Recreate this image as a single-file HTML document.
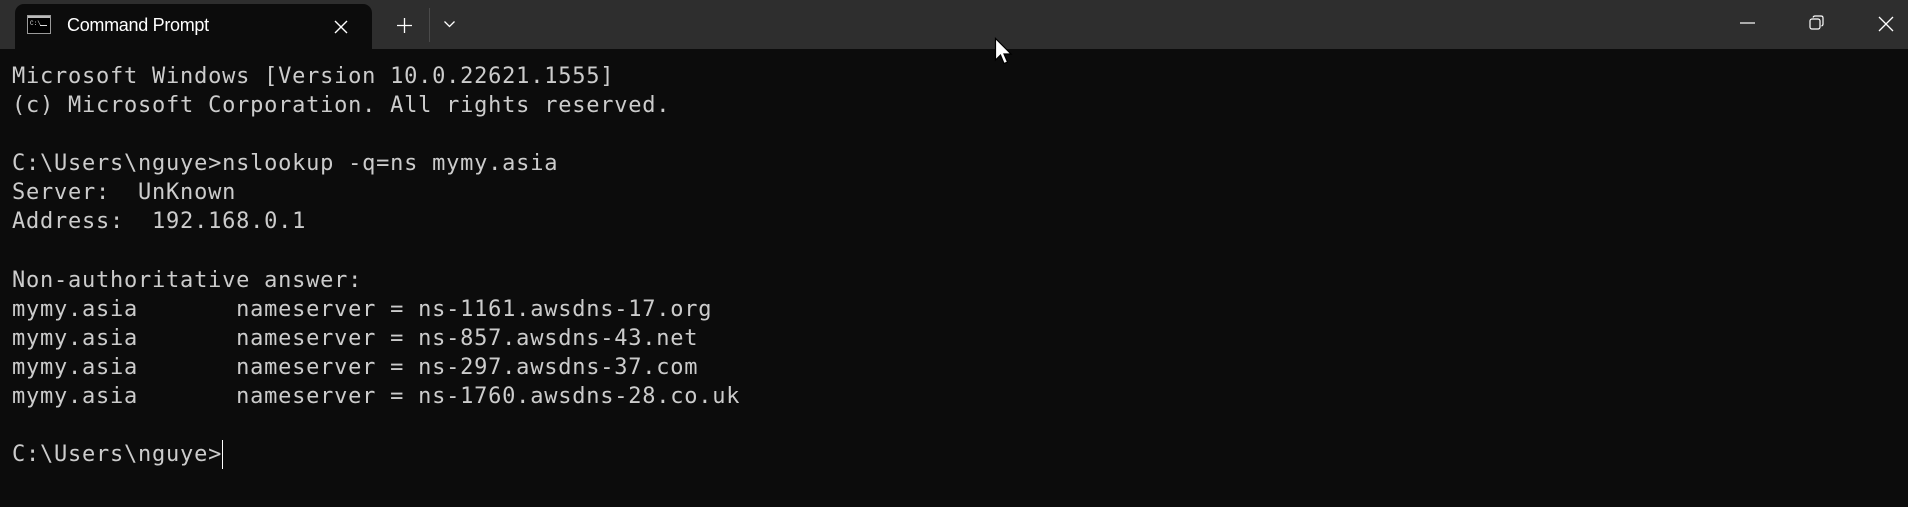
<!DOCTYPE html>
<html><head><meta charset="utf-8"><style>
html,body{margin:0;padding:0;width:1908px;height:507px;overflow:hidden;background:#0c0c0c}
.bar{position:absolute;left:0;top:0;width:1908px;height:49px;background:#2e2e2e}
.tab{position:absolute;left:15px;top:4px;width:357px;height:46px;background:#0c0c0c;border-radius:9px 9px 0 0}
.title{position:absolute;left:67px;top:15px;font:18px "Liberation Sans",sans-serif;color:#fff;letter-spacing:-0.3px}
.term{position:absolute;left:12px;top:62px;margin:0;font-family:"DejaVu Sans Mono","Liberation Mono",monospace;font-size:22px;letter-spacing:0.76px;line-height:29.08px;color:#cccccc;white-space:pre}
.cur{display:inline-block;width:1px;height:29px;background:#fff;vertical-align:top}
svg{position:absolute}
</style></head><body>
<div class="bar"></div>
<div class="tab"></div>
<svg style="left:27px;top:15px" width="25" height="20" viewBox="0 0 25 20">
<rect x="0.5" y="0.5" width="23" height="18" fill="#000" stroke="#9a9a9a"/>
<rect x="1" y="1" width="22" height="2" fill="#bbb"/>
<text x="3" y="10" font-size="6" fill="#ddd" font-family="Liberation Mono">C:\</text>
<rect x="13" y="10" width="7" height="1" fill="#ddd"/>
</svg>
<div class="title">Command Prompt</div>
<svg style="left:334px;top:20px" width="14" height="14"><path d="M1 1L13 13M13 1L1 13" stroke="#fff" stroke-width="1.4"/></svg>
<svg style="left:397px;top:18px" width="15" height="15"><path d="M7.5 0V15M0 7.5H15" stroke="#fff" stroke-width="1.3"/></svg>
<div style="position:absolute;left:429px;top:8px;width:1px;height:34px;background:#4a4a4a"></div>
<svg style="left:444px;top:21px" width="11" height="7"><path d="M0.5 0.5L5.5 5.5L10.5 0.5" stroke="#fff" stroke-width="1.3" fill="none"/></svg>
<svg style="left:1740px;top:22px" width="16" height="2"><path d="M0 1H15" stroke="#fff" stroke-width="1.2"/></svg>
<svg style="left:1809px;top:15px" width="16" height="16"><rect x="1" y="4" width="10" height="10" rx="2" fill="none" stroke="#fff" stroke-width="1.2"/><path d="M4 2.5Q4.5 1 6 1H12Q14 1 14 3V9Q14 10.5 12.5 11" fill="none" stroke="#fff" stroke-width="1.2"/></svg>
<svg style="left:1878px;top:16px" width="16" height="16"><path d="M1 1L15 15M15 1L1 15" stroke="#fff" stroke-width="1.3"/></svg>
<pre class="term">Microsoft Windows [Version 10.0.22621.1555]
(c) Microsoft Corporation. All rights reserved.

C:\Users\nguye&gt;nslookup -q=ns mymy.asia
Server:  UnKnown
Address:  192.168.0.1

Non-authoritative answer:
mymy.asia       nameserver = ns-1161.awsdns-17.org
mymy.asia       nameserver = ns-857.awsdns-43.net
mymy.asia       nameserver = ns-297.awsdns-37.com
mymy.asia       nameserver = ns-1760.awsdns-28.co.uk

C:\Users\nguye&gt;<span class="cur"></span></pre>
<svg style="left:994px;top:37px" width="22" height="30" viewBox="0 0 22 30"><path d="M1.5 1.5V23L6.5 18L10 26.5L13.5 25L10 17H17Z" fill="#fff" stroke="#000" stroke-width="1.2"/></svg>
</body></html>
